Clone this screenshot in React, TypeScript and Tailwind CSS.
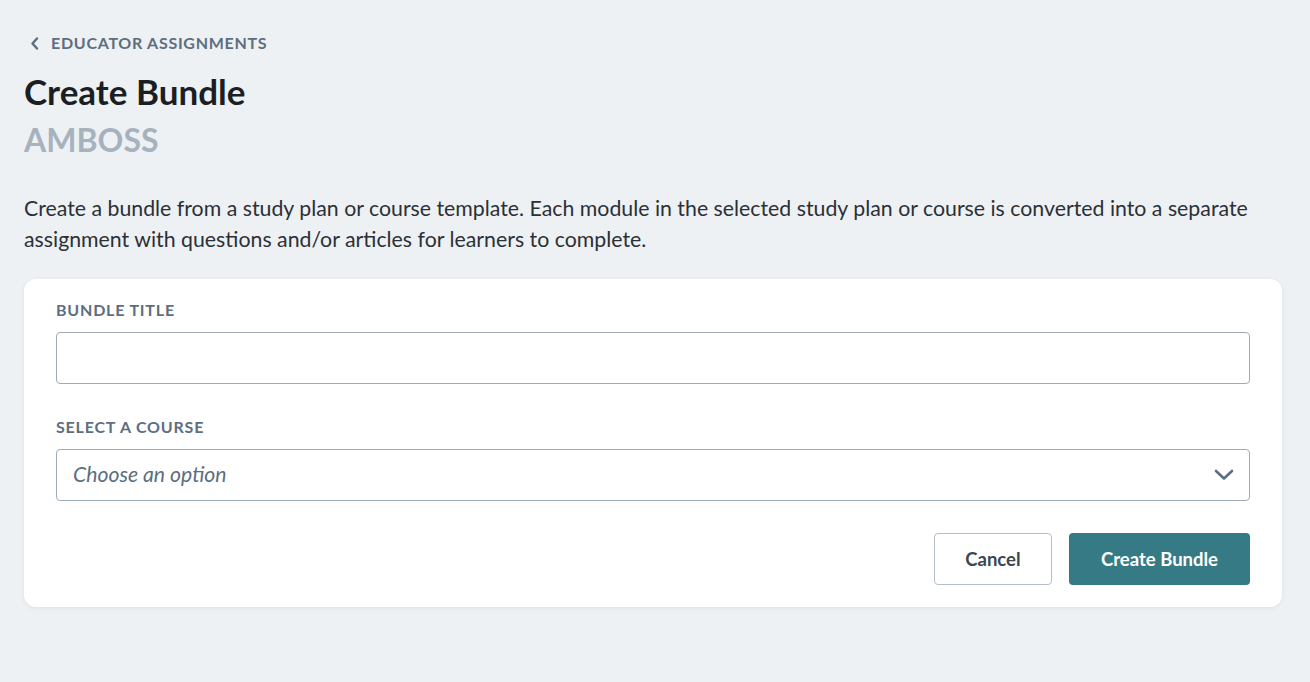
import React from 'react';

const ChevronLeft = () => (
  <svg width="9" height="13" viewBox="0 0 9 13" fill="none" className="shrink-0">
    <path d="M7 1.5L2.5 6.5L7 11.5" stroke="#5c6e80" strokeWidth="2.4" strokeLinecap="round" strokeLinejoin="round" />
  </svg>
);

const ChevronDown = () => (
  <svg width="20" height="12" viewBox="0 0 20 12" fill="none" className="shrink-0">
    <path d="M2 2L10 9.5L18 2" stroke="#5c6e80" strokeWidth="2.6" strokeLinecap="round" strokeLinejoin="round" />
  </svg>
);

const Label = ({ children }: { children: React.ReactNode }) => (
  <div className="text-[16px] leading-5 font-bold uppercase tracking-[0.05em] text-[#5c6e80]">{children}</div>
);

export default function App() {
  return (
    <div className="min-h-screen bg-[#eef1f4] pl-6 pr-[28px] pt-[31px] pb-10 font-['Lato','Noto_Sans',sans-serif]">
      {/* back link */}
      <a href="#" className="flex items-center gap-[12px] h-6 pl-[6px] text-[16px] font-bold uppercase tracking-[0.045em] text-[#5c6e80]">
        <ChevronLeft />
        Educator Assignments
      </a>

      <h1 className="mt-[16px] text-[35px] leading-[40px] font-bold text-[#1b1f23]">Create Bundle</h1>
      <div className="mt-[9px] text-[32px] leading-[40px] font-bold text-[#a6b3bf]">AMBOSS</div>

      <p className="mt-[33px] text-[21.3px] leading-[31px] text-[#2b3036]">
        Create a bundle from a study plan or course template. Each module in the selected study plan or course is converted into a separate assignment with questions and/or articles for learners to complete.
      </p>

      {/* form card */}
      <div className="mt-[24px] rounded-xl bg-white px-8 pt-[21px] pb-[22px] shadow-[0_1px_4px_rgba(30,50,70,0.08)]">
        <Label>Bundle Title</Label>
        <input
          type="text"
          className="mt-3 block h-[52px] w-full rounded-[4px] border border-[#9eacb8] bg-white px-4 text-[21px] text-[#2b3036] outline-none"
        />

        <div className="mt-[33px]">
          <Label>Select a Course</Label>
        </div>
        <div className="mt-3 flex h-[52px] w-full items-center justify-between rounded-[4px] border border-[#9eacb8] bg-white pl-4 pr-[15px]">
          <span className="text-[21.2px] italic text-[#5c6e80]">Choose an option</span>
          <ChevronDown />
        </div>

        <div className="mt-8 flex justify-end gap-[17px]">
          <button className="h-[52px] w-[118px] rounded-[4px] border border-[#b3bec8] bg-white pt-[2px] text-[18.5px] font-bold text-[#3a4651]">
            Cancel
          </button>
          <button className="h-[52px] rounded-[4px] bg-[#367a85] px-8 pt-[2px] text-[18.5px] font-bold text-white">
            Create Bundle
          </button>
        </div>
      </div>
    </div>
  );
}
